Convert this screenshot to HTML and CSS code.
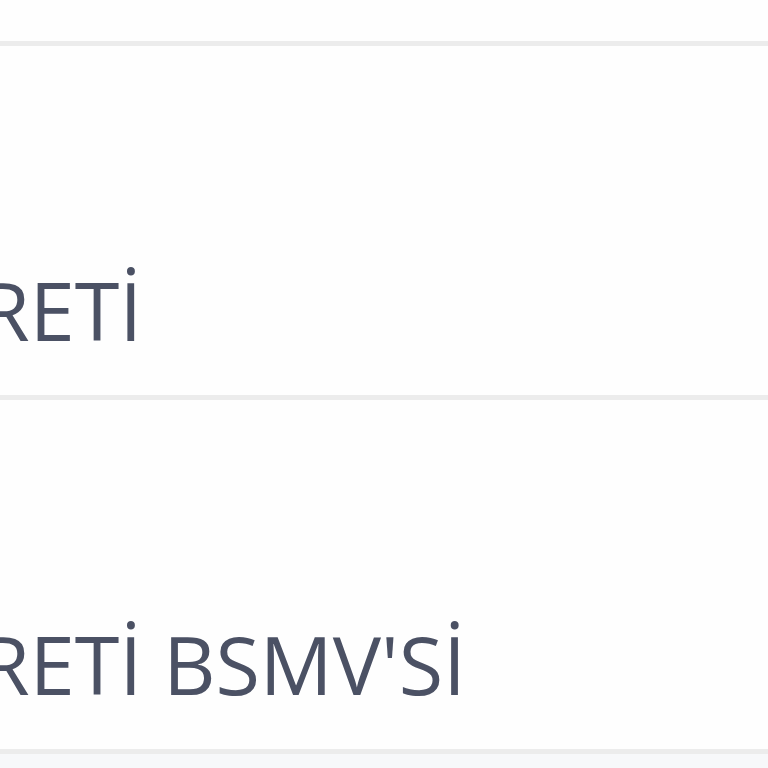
FILE: index.html
```html
<!DOCTYPE html>
<html lang="tr">
<head>
<meta charset="utf-8">
<title>Ücret tablosu</title>
<link rel="stylesheet" href="styles.css">
</head>
<body>
<div class="table">
  <div class="row row-first"></div>
  <div class="row">
    <div class="cell">HAVALE ÜCRETİ</div>
  </div>
  <div class="row">
    <div class="cell">HAVALE ÜCRETİ BSMV'Sİ</div>
  </div>
  <div class="row row-alt"></div>
</div>
</body>
</html>
```

FILE: styles.css
```css
html, body {
  margin: 0;
  padding: 0;
  background: #fefefe;
  overflow: hidden;
}

.table {
  display: flex;
  flex-direction: column;
  width: 768px;
  height: 768px;
  overflow: hidden;
}

.row {
  flex: 0 0 auto;
  height: 349px;
  border-top: 5px solid #ececec;
  display: flex;
  align-items: flex-end;
  background: #fefefe;
}

.row-first {
  height: 41px;
  border-top: none;
}

.row-alt {
  background: #f7f8fa;
}

.cell {
  font-family: "Open Sans", "Noto Sans", sans-serif;
  font-size: 81px;
  line-height: 1.2;
  color: #4b5164;
  white-space: nowrap;
  padding-bottom: 37px;
  margin-left: -449px;
}
```
